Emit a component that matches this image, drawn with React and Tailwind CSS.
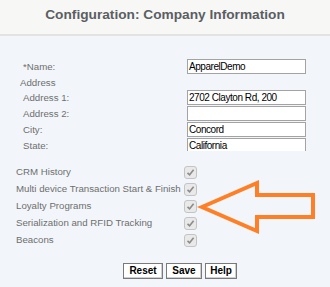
import React from "react";

const Check = () => (
  <div className="w-[13px] h-[13px] rounded-[3px] border border-[#c4c4c4] bg-[#e9e9e9] flex items-center justify-center">
    <svg width="9" height="9" viewBox="0 0 9 9">
      <path d="M1.5 4.8 L3.6 6.8 L7.6 1.8" fill="none" stroke="#8c8c8c" strokeWidth="1.6" />
    </svg>
  </div>
);

const Field = ({ value }) => (
  <div className="w-[119px] h-[15px] border border-[#a3a3a3] bg-white text-[10px] tracking-[-0.45px] leading-[14px] text-black px-[1px] overflow-hidden whitespace-nowrap">
    {value}
  </div>
);

export default function App() {
  const rows = [
    ["CRM History"],
    ["Multi device Transaction Start & Finish"],
    ["Loyalty Programs"],
    ["Serialization and RFID Tracking"],
    ["Beacons"],
  ];
  return (
    <div className="relative w-[330px] h-[287px] bg-[#f2f6fa] overflow-hidden font-['Liberation_Sans',Arial,sans-serif]">
      <div className="h-[36px] bg-[#f7f7f5] border-b-2 border-[#e3e3e1] flex items-center justify-center">
        <span className="text-[13.7px] font-bold text-[#5a5e63] pb-[4px]">Configuration: Company Information</span>
      </div>

      <div className="h-[115px] overflow-hidden pt-[23px] text-[9.7px] text-[#6e6e6e]">
        <div className="flex h-[16px] items-start">
          <div className="w-[187px] pl-[23px] leading-[16px]">*Name:</div>
          <Field value="ApparelDemo" />
        </div>
        <div className="h-[15px] pl-[20px] leading-[15px]">Address</div>
        <div className="flex h-[16px] items-start">
          <div className="w-[187px] pl-[23px] leading-[15px]">Address 1:</div>
          <Field value="2702 Clayton Rd, 200" />
        </div>
        <div className="flex h-[16px] items-start">
          <div className="w-[187px] pl-[23px] leading-[15px]">Address 2:</div>
          <Field value="" />
        </div>
        <div className="flex h-[16px] items-start">
          <div className="w-[187px] pl-[23px] leading-[15px]">City:</div>
          <Field value="Concord" />
        </div>
        <div className="flex h-[16px] items-start">
          <div className="w-[187px] pl-[23px] leading-[15px]">State:</div>
          <Field value="California" />
        </div>
      </div>

      <div className="mt-[13px] text-[9.7px] text-[#6e6e6e]">
        {rows.map(([label]) => (
          <div key={label} className="flex h-[17px] items-center">
            <div className="w-[184px] pl-[16px] whitespace-nowrap">{label}</div>
            <Check />
          </div>
        ))}
      </div>

      <div className="mt-[14px] flex gap-[3px] pl-[123px]">
        <button className="w-[40px] h-[16px] bg-white border border-[#7a7a7a] shadow-[inset_-1px_-1px_0_#cfcfcf] text-[10px] font-bold text-black leading-[14px]">Reset</button>
        <button className="w-[36px] h-[16px] bg-white border border-[#7a7a7a] shadow-[inset_-1px_-1px_0_#cfcfcf] text-[10px] font-bold text-black leading-[14px]">Save</button>
        <button className="w-[32px] h-[16px] bg-white border border-[#7a7a7a] shadow-[inset_-1px_-1px_0_#cfcfcf] text-[10px] font-bold text-black leading-[14px]">Help</button>
      </div>

      <svg className="absolute left-0 top-0 pointer-events-none" width="330" height="287">
        <polygon
          points="202,207 257,183 257,195 313,195 313,217 257,217 257,231"
          fill="none"
          stroke="#ff7f27"
          strokeWidth="4"
          strokeLinejoin="miter"
        />
      </svg>
    </div>
  );
}
